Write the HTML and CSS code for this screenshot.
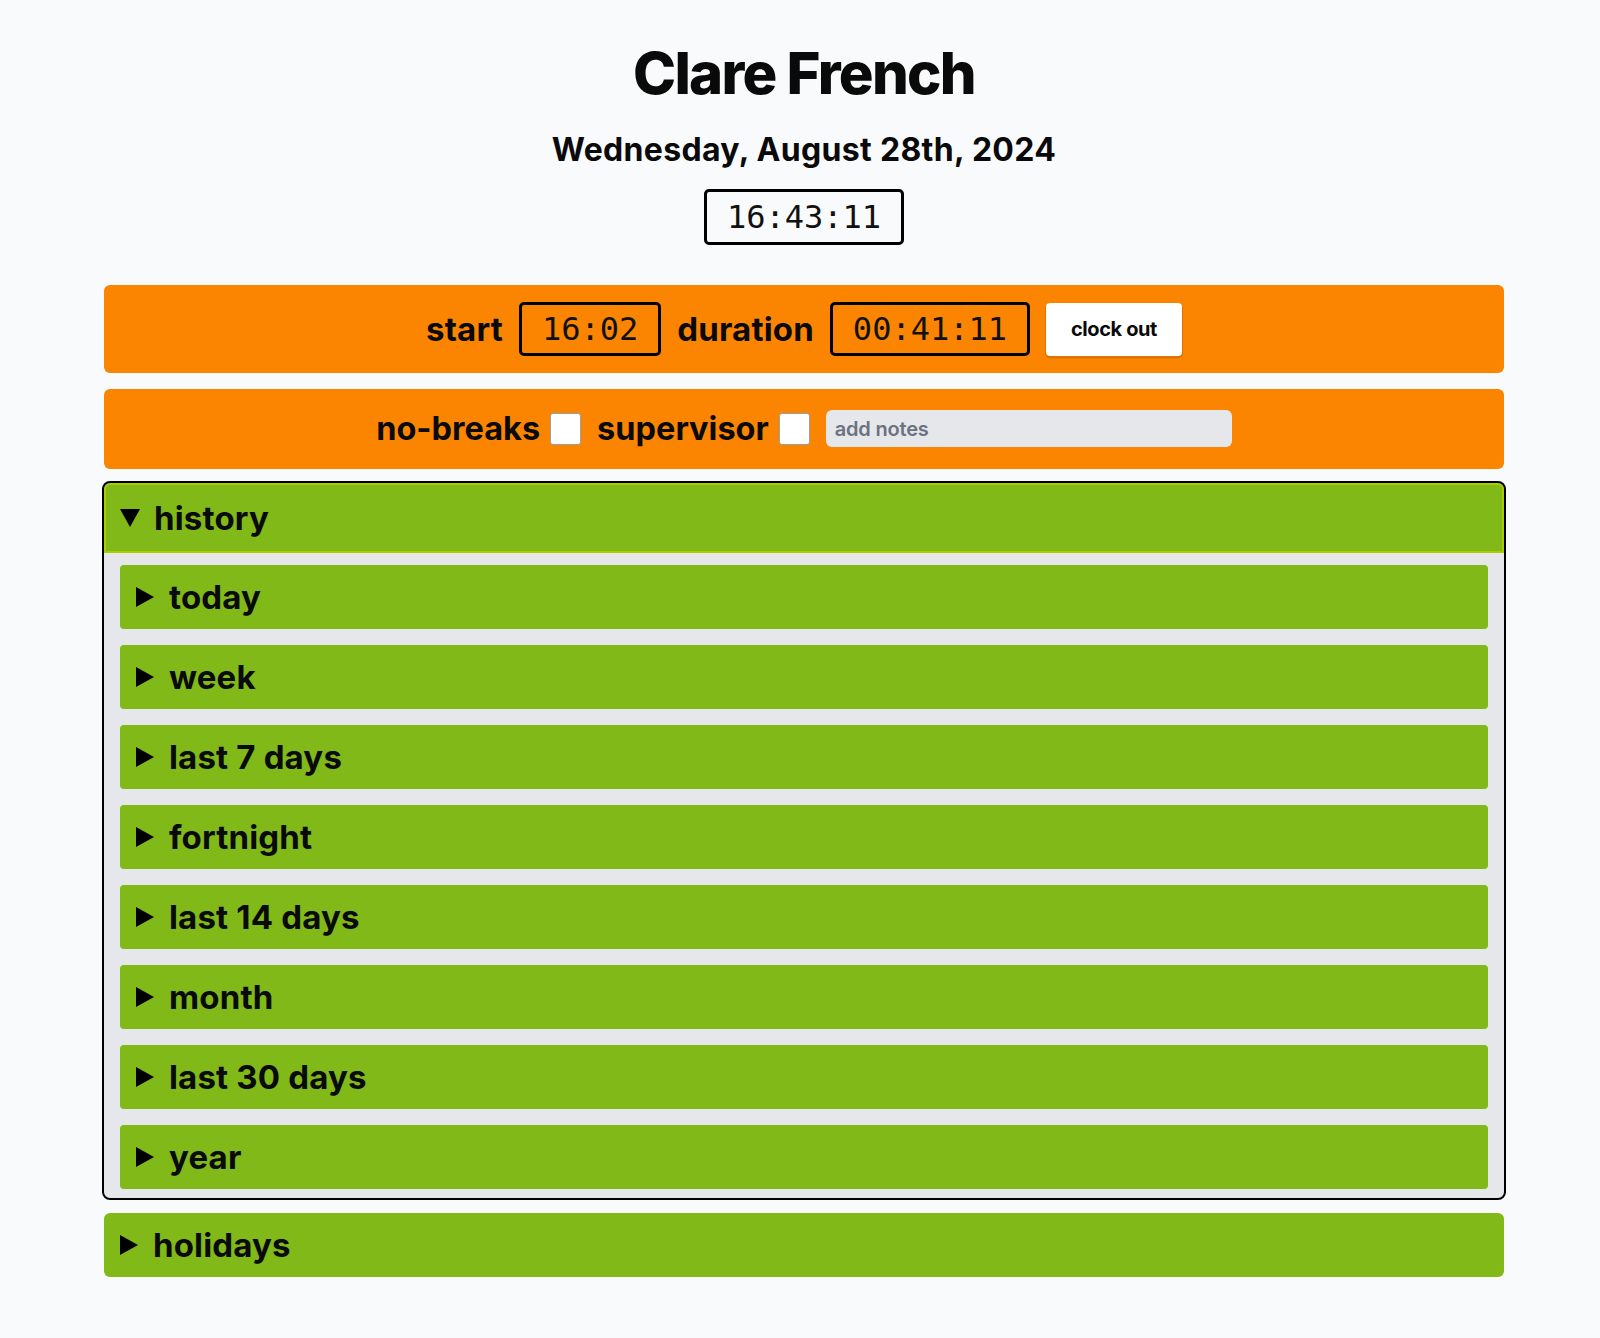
FILE: index.html
```html
<!DOCTYPE html>
<html lang="en">
<head>
<meta charset="utf-8">
<title>Clare French</title>
<link rel="stylesheet" href="styles.css">
</head>
<body>
<div class="page">
  <header class="head">
    <h1 class="name">Clare French</h1>
    <div class="date">Wednesday, August 28th, 2024</div>
    <div class="timebox clock">16:43:11</div>
  </header>

  <section class="bar bar-shift">
    <span class="label">start</span>
    <span class="timebox">16:02</span>
    <span class="label">duration</span>
    <span class="timebox">00:41:11</span>
    <button class="btn" type="button">clock out</button>
  </section>

  <section class="bar bar-opts">
    <label class="opt"><span class="label label-sm">no-breaks</span><input class="check" type="checkbox"></label>
    <label class="opt"><span class="label label-sm">supervisor</span><input class="check" type="checkbox"></label>
    <input class="notes" type="text" placeholder="add notes">
  </section>

  <details class="group history" open>
    <summary class="sum sum-open"><svg class="tri-down" width="20" height="18" viewBox="0 0 20 18"><path d="M0 0H20L10 18Z"/></svg><span>history</span></summary>
    <div class="group-body">
      <details class="item"><summary class="sum"><svg class="tri" width="18" height="20" viewBox="0 0 18 20"><path d="M0 0L18 10L0 20Z"/></svg><span>today</span></summary></details>
      <details class="item"><summary class="sum"><svg class="tri" width="18" height="20" viewBox="0 0 18 20"><path d="M0 0L18 10L0 20Z"/></svg><span>week</span></summary></details>
      <details class="item"><summary class="sum"><svg class="tri" width="18" height="20" viewBox="0 0 18 20"><path d="M0 0L18 10L0 20Z"/></svg><span>last 7 days</span></summary></details>
      <details class="item"><summary class="sum"><svg class="tri" width="18" height="20" viewBox="0 0 18 20"><path d="M0 0L18 10L0 20Z"/></svg><span>fortnight</span></summary></details>
      <details class="item"><summary class="sum"><svg class="tri" width="18" height="20" viewBox="0 0 18 20"><path d="M0 0L18 10L0 20Z"/></svg><span>last 14 days</span></summary></details>
      <details class="item"><summary class="sum"><svg class="tri" width="18" height="20" viewBox="0 0 18 20"><path d="M0 0L18 10L0 20Z"/></svg><span>month</span></summary></details>
      <details class="item"><summary class="sum"><svg class="tri" width="18" height="20" viewBox="0 0 18 20"><path d="M0 0L18 10L0 20Z"/></svg><span>last 30 days</span></summary></details>
      <details class="item"><summary class="sum"><svg class="tri" width="18" height="20" viewBox="0 0 18 20"><path d="M0 0L18 10L0 20Z"/></svg><span>year</span></summary></details>
    </div>
  </details>

  <details class="group holidays">
    <summary class="sum sum-top"><svg class="tri" width="18" height="20" viewBox="0 0 18 20"><path d="M0 0L18 10L0 20Z"/></svg><span>holidays</span></summary>
  </details>
</div>
</body>
</html>
```

FILE: styles.css
```css
* { box-sizing: border-box; }

html, body {
  margin: 0;
  background: #f9fafb;
}

body {
  padding: 0 0 0 8px;
  font-family: "Inter", "Noto Sans", "Liberation Sans", sans-serif;
  color: #0a0a0a;
}

.page {
  width: 1400px;
  margin: 0 auto;
  padding-top: 44px;
  padding-bottom: 60px;
  display: flex;
  flex-direction: column;
  gap: 16px;
}

.head {
  display: flex;
  flex-direction: column;
  align-items: center;
  margin-bottom: 24px;
}

.name {
  margin: 0;
  font-size: 58px;
  line-height: 58px;
  font-weight: 800;
  letter-spacing: -0.03em;
}

.date {
  margin-top: 28px;
  font-size: 32px;
  line-height: 40px;
  font-weight: 700;
  letter-spacing: 0.01em;
}

.timebox {
  display: inline-block;
  font-family: "DejaVu Sans Mono", "Liberation Mono", monospace;
  font-size: 32px;
  line-height: 40px;
  padding: 4px 20px;
  border: 3px solid #000;
  border-radius: 5px;
  color: #111;
}

.clock {
  margin-top: 19px;
  padding: 5px 20px;
}

.bar {
  background: #fb8500;
  border-radius: 6px;
  display: flex;
  justify-content: center;
  align-items: center;
  gap: 16px;
}

.bar-shift {
  padding: 17px 16px 17px;
}

.bar-opts {
  padding: 20px 16px 21px;
}

.label {
  font-size: 33px;
  line-height: 39px;
  font-weight: 700;
  letter-spacing: 0.005em;
}

.label-sm {
  font-size: 32.5px;
  letter-spacing: 0;
}

.btn {
  font-family: "Inter", "Noto Sans", sans-serif;
  font-size: 20px;
  font-weight: 700;
  letter-spacing: -0.02em;
  color: #0a0a0a;
  background: #fff;
  border: none;
  border-radius: 4px;
  box-shadow: 0 1.5px 0 1px rgba(0, 0, 0, 0.12);
  height: 53px;
  padding: 0 25px;
}

.opt {
  display: flex;
  align-items: center;
  gap: 10px;
}

.check {
  appearance: none;
  -webkit-appearance: none;
  margin: 0;
  width: 31px;
  height: 32px;
  background: #fff;
  border: 1px solid #9aa0a8;
  border-radius: 3px;
}

.notes {
  width: 406px;
  height: 37px;
  border: none;
  border-radius: 6px;
  background: #e5e7eb;
  padding: 0 9px;
  font-family: "Inter", "Noto Sans", sans-serif;
  font-size: 20px;
  font-weight: 600;
  color: #374151;
  letter-spacing: -0.01em;
}

.notes::placeholder {
  color: #6b7280;
}

.group {
  background: #80b918;
  border-radius: 6px;
}

.history {
  margin-top: -2px;
  background: #e5e7eb;
  outline: 2.5px solid #000;
  outline-offset: 0;
}

.holidays {
  margin-top: -1px;
}

.sum {
  list-style: none;
  display: flex;
  align-items: center;
  font-size: 33px;
  line-height: 40px;
  font-weight: 700;
  letter-spacing: 0.005em;
  cursor: pointer;
}

.sum::-webkit-details-marker { display: none; }

.sum-open {
  background: #80b918;
  border: 2px solid #aacc00;
  border-radius: 6px 6px 0 0;
  padding: 13px 14px;
  gap: 14px;
}

.sum-top {
  padding: 12px 16px;
  gap: 15px;
}

.tri, .tri-down {
  flex: none;
  fill: #000;
}

.group-body {
  padding: 12px 16px 9px;
  display: flex;
  flex-direction: column;
  gap: 16px;
}

.item {
  background: #80b918;
  border-radius: 4px;
}

.item .sum {
  padding: 12px 16px;
  gap: 15px;
}
```
